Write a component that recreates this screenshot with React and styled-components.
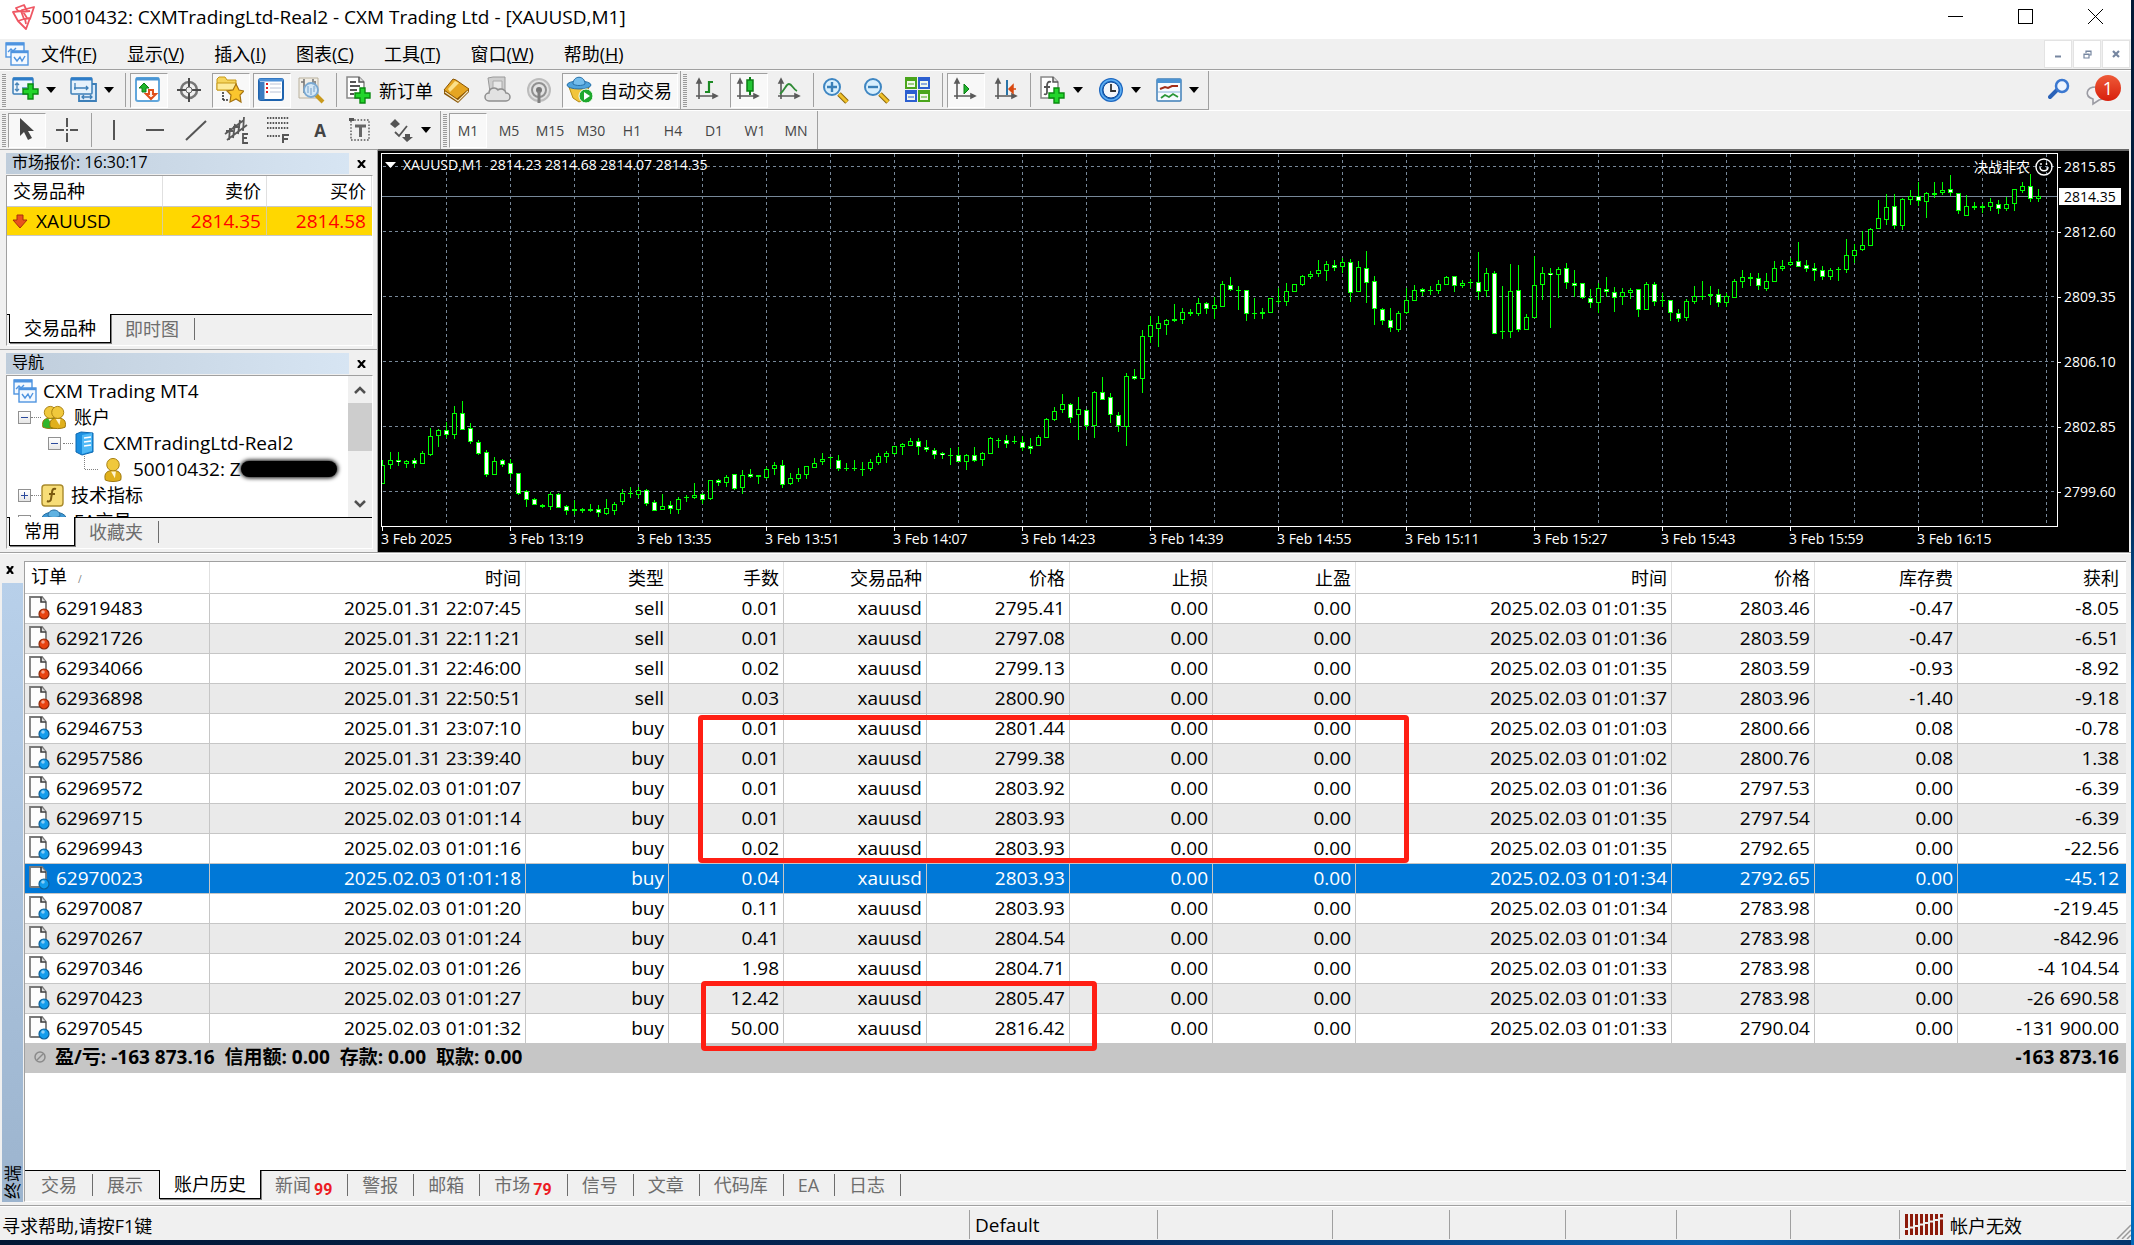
import React from "react";
import styled, { createGlobalStyle } from "styled-components";

const GlobalStyle = createGlobalStyle`
  * {
    box-sizing: border-box;
  }
  body {
    margin: 0;
    font-family: "Open Sans", "Noto Sans CJK SC", sans-serif;
    font-size: 18px;
    color: #000;
  }
  button {
    font-family: inherit;
    color: inherit;
    background: none;
    border: 0;
    padding: 0;
    margin: 0;
  }
  svg {
    flex: none;
  }
`;

const Desktop = styled.div`
  min-height: 100vh;
  padding: 0 3px 5px 0;
  display: flex;
  background:
    linear-gradient(180deg, #021a36 0, #03254b 40%, #0078d7 55%, #00a2f2 75%, #0067b8 100%) right / 3px 100% no-repeat,
    linear-gradient(90deg, #021734 0, #03285a 50%, #0a5fae 80%, #03336b 100%);
`;
const Window = styled.div`
  flex: 1;
  min-width: 0;
  display: flex;
  flex-direction: column;
  background: #f0f0f0;
`;

/* title bar and menu */
const TitleBar = styled.header`
  height: 39px;
  background: #fff;
  display: flex;
  align-items: center;
  padding: 0 0 6px 11px;
`;
const Title = styled.h1`
  flex: 1;
  margin: 0 0 0 5px;
  font-size: 19px;
  font-weight: 400;
  line-height: 32px;
`;
const Caption = styled.button`
  width: 70px;
  height: 32px;
  display: flex;
  align-items: center;
  justify-content: center;
`;
const MenuBar = styled.nav`
  height: 31px;
  display: flex;
  align-items: center;
  padding-left: 5px;
  border-bottom: 1px solid #a0a0a0;
`;
const MenuList = styled.div`
  flex: 1;
  display: flex;
  gap: 30px;
  margin-left: 12px;
`;
const MenuItem = styled.button`
  font-size: 18px;
  line-height: 24px;
`;
const MdiButton = styled.button`
  width: 28px;
  height: 28px;
  margin-right: 1px;
  background: #fff;
  border: 1px solid #e3e3e3;
  display: flex;
  align-items: center;
  justify-content: center;
`;

/* toolbars */
const Toolbar = styled.div`
  height: ${(props) => (props.last ? 39 : 40)}px;
  display: flex;
  border-top: 1px solid #fff;
`;
const Group = styled.div`
  display: flex;
  align-items: center;
  gap: 3px;
  padding: 0 2px 0 8px;
  border-right: 1px solid #a0a0a0;
  border-bottom: ${(props) => (props.last ? "0" : "1px solid #a0a0a0")};
  background: repeating-linear-gradient(180deg, #9a9a9a 0 1px, #f0f0f0 1px 2px) 2px 3px / 4px 34px no-repeat;
`;
const ToolButton = styled.button`
  height: 35px;
  width: ${(props) => props.w || 38}px;
  display: flex;
  align-items: center;
  padding: 0 3px;
  gap: 6px;
  font-size: 18px;
  white-space: nowrap;
  border: 1px solid transparent;
  flex: none;
  ${(props) =>
    props.pressed &&
    `
    border-color: #a0a0a0 #fff #fff #a0a0a0;
    background: #f8f8f8;
  `}
`;
const Period = styled(ToolButton)`
  justify-content: center;
  padding: 0;
  font-size: 14px;
  font-weight: 500;
  color: #444;
`;
const TextTool = styled(Period)`
  font-size: 17px;
  font-weight: 700;
`;
const Separator = styled.span`
  width: 1px;
  height: 34px;
  margin: 0 1px;
  background: #a0a0a0;
`;
const ToolbarEnd = styled.div`
  margin-left: auto;
  display: flex;
  align-items: center;
  gap: 14px;
  padding-right: 10px;
`;
const SearchButton = styled.button`
  width: 24px;
  height: 28px;
`;
const ChatButton = styled.button`
  position: relative;
  width: 36px;
  height: 34px;
`;
const Count = styled.span`
  position: absolute;
  top: 1px;
  right: 0;
  width: 26px;
  height: 26px;
  border-radius: 50%;
  background: linear-gradient(#ee5a38, #d81f0c);
  color: #fff;
  font-size: 18px;
  line-height: 26px;
`;

/* middle area */
const Middle = styled.div`
  display: flex;
  height: 404px;
  border-bottom: 1px solid #a0a0a0;
`;
const Sidebar = styled.aside`
  width: 378px;
  flex: none;
  display: flex;
  flex-direction: column;
  border-top: 1px solid #a0a0a0;
  border-right: 1px solid #a0a0a0;
`;
const Panel = styled.section`
  height: ${(props) => props.h}px;
  display: flex;
  flex-direction: column;
  padding: 3px 4px 3px 6px;
  border-bottom: ${(props) => (props.last ? "0" : "1px solid #a0a0a0")};
`;
const PanelHead = styled.div`
  height: 22px;
  flex: none;
  display: flex;
  align-items: stretch;
`;
const PanelTitle = styled.h2`
  flex: 1;
  margin: 0 0 1px;
  padding-left: 6px;
  font-size: 16px;
  font-weight: 400;
  line-height: 19px;
  background: linear-gradient(90deg, #bfcddb, #d7e5f3);
`;
const CloseButton = styled.button`
  width: 24px;
  height: 22px;
  display: flex;
  align-items: center;
  justify-content: center;
`;
const PanelBody = styled.div`
  flex: 1;
  min-height: 0;
  display: flex;
  flex-direction: column;
  border-top: 1px solid #a0a0a0;
  border-left: 1px solid #a0a0a0;
  border-right: 1px solid #fff;
  border-bottom: 1px solid #fff;
`;
const White = styled.div`
  flex: 1;
  min-height: 0;
  background: #fff;
`;
const Quotes = styled.table`
  width: 100%;
  table-layout: fixed;
  border-spacing: 0;
`;
const QuoteHead = styled.th`
  height: 31px;
  padding: 0 5px 0 6px;
  font-size: 18px;
  font-weight: 400;
  line-height: 28px;
  text-align: ${(props) => (props.left ? "left" : "right")};
  border-right: 1px solid #e0e0e0;
  border-bottom: 1px solid #c8c8c8;
`;
const Quote = styled.td`
  height: 29px;
  padding: 0 5px 0 5px;
  font-size: 19px;
  line-height: 28px;
  background: #ffd700;
  color: ${(props) => (props.left ? "#000" : "#ff0000")};
  text-align: ${(props) => (props.left ? "left" : "right")};
  border-right: 1px solid ${(props) => (props.end ? "#ffd700" : "#d8cf9a")};
  border-bottom: 1px solid #c8c8c8;
`;
const Symbol = styled.span`
  display: flex;
  align-items: center;
  gap: 8px;
`;

const TabBar = styled.div`
  display: flex;
  height: 31px;
  flex: none;
  padding-left: 2px;
  border-top: 1px solid #000;
`;
const Tab = styled.button`
  display: flex;
  align-items: center;
  height: 22px;
  margin-top: 3px;
  padding: 0 15px 0 14px;
  font-size: 18px;
  line-height: 20px;
  color: #6d6d6d;
  border-right: 1px solid ${(props) => (props.beforeActive ? "transparent" : "#6d6d6d")};
  ${(props) =>
    props.active &&
    `
    height: 29px;
    margin-top: -1px;
    padding: 0 14px 0;
    color: #000;
    background: #fff;
    border-left: 1px solid #000;
    border-right: 1px solid #000;
    border-bottom: 1px solid #000;
    box-shadow: 1px 1px 0 #808080;
  `}
`;
const Badge = styled.span`
  align-self: flex-end;
  margin: 0 0 -4px 3px;
  font-family: Roboto, sans-serif;
  font-size: 16px;
  font-weight: 700;
  color: #ed1c24;
`;

/* navigator tree */
const TreeWrap = styled(White)`
  display: flex;
  overflow: hidden;
`;
const Tree = styled.ul`
  flex: 1;
  margin: 0;
  padding: 2px 0 0;
  list-style: none;
  min-width: 0;
`;
const Node = styled.li`
  height: 26px;
  display: flex;
  align-items: center;
  gap: ${(props) => props.gap || 7}px;
  padding-left: ${(props) => props.indent}px;
  font-size: 19px;
  line-height: 26px;
  white-space: nowrap;
`;
const NodeText = styled.span`
  font-size: ${(props) => (props.cjk ? 18 : 19)}px;
`;
const Expander = styled.button`
  width: 13px;
  height: 13px;
  flex: none;
  border: 1px solid #919191;
  background: linear-gradient(#fff, #e6e6e6);
  display: flex;
`;
const Dots = styled.span`
  width: 10px;
  flex: none;
  margin: 0 -7px;
  border-top: 1px dotted #808080;
`;
const Masked = styled.span`
  width: 96px;
  height: 16px;
  margin-left: -10px;
  border-radius: 8px;
  background: #000;
  box-shadow: 0 0 4px 1px #000;
`;
const ScrollBar = styled.div`
  width: 24px;
  background: #f0f0f0;
  display: flex;
  flex-direction: column;
  align-items: center;
`;
const ScrollThumb = styled.div`
  width: 24px;
  height: 48px;
  background: #cdcdcd;
`;
const ScrollArrow = styled.button`
  width: 24px;
  height: 27px;
  margin-top: ${(props) => (props.down ? "auto" : 0)};
  display: flex;
  align-items: center;
  justify-content: center;
`;

/* chart */
const ChartArea = styled.section`
  flex: 1;
  min-width: 0;
  margin-right: 2px;
  padding: 2px 0 0 3px;
  background: #000;
  border-top: 2px solid #696969;
  display: grid;
  grid-template-columns: 1fr 71px;
  grid-template-rows: 374px 1fr;
  color: #fff;
  font-size: 14px;
`;
const Plot = styled.div`
  position: relative;
  border: 1px solid #fff;
  overflow: hidden;
`;
const PlotSvg = styled.svg`
  display: block;
  width: 100%;
  height: 100%;
`;
const PlotLabel = styled.div`
  position: absolute;
  top: 1px;
  left: 3px;
  display: flex;
  align-items: center;
  gap: 7px;
  line-height: 20px;
  white-space: pre;
`;
const ExpertLabel = styled.div`
  position: absolute;
  top: 3px;
  right: 4px;
  display: flex;
  align-items: center;
  gap: 5px;
  line-height: 20px;
`;
const PriceAxis = styled.div`
  position: relative;
  padding-top: 4px;
  display: flex;
  flex-direction: column;
  gap: 45px;
`;
const Price = styled.div`
  height: 20px;
  line-height: 20px;
  display: flex;
  align-items: center;
  &::before {
    content: "";
    width: 3px;
    height: 1px;
    margin-right: 3px;
    background: #fff;
  }
`;
const LastPrice = styled.div`
  position: absolute;
  top: 35px;
  left: 1px;
  padding: 0 5px;
  line-height: 17px;
  background: #fff;
  color: #000;
`;
const TimeAxis = styled.div`
  grid-column: 1 / 3;
  display: flex;
  overflow: hidden;
`;
const Time = styled.div`
  width: 128px;
  flex: none;
  line-height: 16px;
  white-space: nowrap;
  &::before {
    content: "";
    display: block;
    width: 1px;
    height: 4px;
    margin: 0 0 0 1px;
    background: #fff;
  }
`;

/* terminal */
const Terminal = styled.section`
  flex: 1;
  display: flex;
  padding: 7px 5px 3px 2px;
  border-top: 1px solid #fff;
`;
const TerminalRail = styled.div`
  width: 22px;
  display: flex;
  flex-direction: column;
`;
const RailClose = styled(CloseButton)`
  width: 16px;
  height: 18px;
  margin-bottom: 4px;
`;
const Rail = styled.div`
  flex: 1;
  width: 21px;
  padding-top: 3px;
  background: linear-gradient(#9cb4ce, #b8d0ea);
  writing-mode: vertical-rl;
  text-orientation: sideways;
  transform: rotate(180deg);
  font-size: 17px;
  line-height: 21px;
`;
const TerminalBody = styled.div`
  flex: 1;
  min-width: 0;
  display: flex;
  flex-direction: column;
  border-top: 1px solid #a0a0a0;
  border-left: 1px solid #a0a0a0;
  border-bottom: 1px solid #fff;
`;
const Orders = styled.div`
  position: relative;
  flex: 1;
  background: #fff;
  overflow: hidden;
`;
const OrderTable = styled.table`
  width: 100%;
  table-layout: fixed;
  border-spacing: 0;
`;
const Th = styled.th`
  height: 31px;
  padding: 0 4px 0 6px;
  font-size: 18px;
  font-weight: 400;
  line-height: 28px;
  text-align: right;
  border-right: 1px solid #e0e0e0;
  border-bottom: 1px solid #c6c6c6;
  &:first-child {
    text-align: left;
  }
  &:last-child {
    border-right: 0;
    padding-right: 7px;
  }
`;
const SortMark = styled.span`
  margin-left: 11px;
  font-size: 10px;
  color: #808080;
`;
const Td = styled.td`
  height: 30px;
  padding: 0 4px 2px 3px;
  font-size: 19px;
  line-height: 26px;
  text-align: right;
  white-space: nowrap;
  border-right: 1px solid #c6c6c6;
  border-bottom: 1px solid #c6c6c6;
  &:last-child {
    border-right: 0;
    padding-right: 7px;
  }
`;
const Tr = styled.tr`
  &:nth-child(even) {
    background: #eaeaea;
  }
  &:last-child ${Td} {
    height: 29px;
    border-bottom: 0;
  }
  ${(props) =>
    props.selected &&
    `
    && {
      background: #0078d7;
      color: #fff;
    }
  `}
`;
const OrderId = styled.span`
  display: flex;
  align-items: center;
  gap: 6px;
`;
const TotalCell = styled.td`
  height: 30px;
  padding: 0 7px 2px 8px;
  background: #c6c6c6;
  font-size: 19px;
  font-weight: 700;
  line-height: 26px;
  text-align: ${(props) => (props.right ? "right" : "left")};
  white-space: pre;
`;
const TotalText = styled.span`
  display: flex;
  align-items: center;
  gap: 8px;
`;
const Marker = styled.div`
  position: absolute;
  border: 5px solid #ff1f14;
  border-radius: 4px;
  pointer-events: none;
`;
const MarkerHedge = styled(Marker)`
  left: 673px;
  top: 153px;
  width: 711px;
  height: 148px;
`;
const MarkerLots = styled(Marker)`
  left: 676px;
  top: 419px;
  width: 396px;
  height: 70px;
`;

/* status bar */
const StatusBar = styled.footer`
  height: 35px;
  display: flex;
  border-top: 1px solid #a0a0a0;
  box-shadow: inset 0 1px 0 #fff;
  padding: 4px 0 1px;
`;
const StatusCell = styled.div`
  ${(props) => (props.w ? `width: ${props.w}px;` : "flex: 1;")}
  display: flex;
  align-items: center;
  gap: 6px;
  padding-left: ${(props) => (props.first ? 2 : 5)}px;
  font-size: ${(props) => (props.latin ? 19 : 18)}px;
  border-left: ${(props) => (props.first ? "0" : "1px solid #a0a0a0")};
`;
const Resize = styled.span`
  margin-left: auto;
  align-self: flex-end;
  height: 15px;
  line-height: 0;
`;

/* ---------- icons ---------- */
const I = ({ children }) => (
  <svg width="28" height="28" viewBox="0 0 28 28" fill="none">
    {children}
  </svg>
);
const Plus = ({ x = 10, y = 10 }) => (
  <path
    transform={`translate(${x} ${y})`}
    d="M6 1h5v5h5v5h-5v5H6v-5H1V6h5z"
    fill="#23d52b"
    stroke="#0a8a10"
    strokeWidth="1.4"
  />
);
const Axes = () => (
  <path d="M6 5v18M3 20h20M6 3l-2 4h4zM24 20l-4-2v4z" stroke="#5a5a5a" strokeWidth="1.6" fill="#5a5a5a" />
);
const NewChartIcon = () => (
  <I>
    <rect x="1" y="2" width="20" height="16" rx="1" fill="#eef6fd" stroke="#3d7fb8" strokeWidth="1.5" />
    <path d="M1 3h20" stroke="#2d7cc8" strokeWidth="3" />
    <path d="M5 7v8M3 9l2-2 2 2M3 13l2 2 2-2M10 12h5" stroke="#4a86b8" strokeWidth="1.3" />
    <Plus x={10} y={7} />
  </I>
);
const ProfilesIcon = () => (
  <I>
    <path d="M22 8h4v17H9v-6" fill="#dcebf8" stroke="#3d7fb8" strokeWidth="1.8" />
    <path d="M12 21h10M14 19l-2 2 2 2M20 19l2 2-2 2" stroke="#3d7fb8" strokeWidth="1.3" />
    <rect x="1" y="2" width="21" height="16" rx="1" fill="#e6f2fb" stroke="#3d7fb8" strokeWidth="1.5" />
    <path d="M1 3h21" stroke="#2d7cc8" strokeWidth="3" />
    <path d="M5 7v7M4 12h14M16 10l2 2-2 2" stroke="#3d7fb8" strokeWidth="1.3" />
  </I>
);
const WatchIcon = () => (
  <I>
    <rect x="2" y="2" width="23" height="23" rx="2" fill="#fff" stroke="#62a7dc" strokeWidth="2" />
    <path d="M2 3h23" stroke="#4a96d4" strokeWidth="3" />
    <path d="M10 7l5 5h-3v4H8v-4H5z" fill="#20b52a" stroke="#0d7f16" />
    <path d="M17 23l5-5h-3v-4h-4v4h-3z" fill="#fff0e8" stroke="#e0501c" strokeWidth="2" />
  </I>
);
const DataIcon = () => (
  <I>
    <circle cx="14" cy="14" r="8" stroke="#777" strokeWidth="2.5" />
    <path d="M14 2v9M14 17v9M2 14h9M17 14h9" stroke="#4c4c4c" strokeWidth="2" />
    <circle cx="14" cy="14" r="3" fill="#eee" stroke="#666" />
  </I>
);
const NavigatorIcon = () => (
  <I>
    <path d="M1 3l2-2h6l2 3h9v10H1z" fill="#f6d55c" stroke="#c79a1a" />
    <path d="M1 7h19v7H1z" fill="#fdeb9a" stroke="#c79a1a" />
    <path d="M7 16v9M7 24h6" stroke="#333" strokeWidth="1.6" strokeDasharray="2 1" />
    <path d="M20 8l3 6 5 1-4 4 1 7-5-3-6 3 1-7-4-4 6-1z" fill="#fbc52d" stroke="#a67412" strokeWidth="1.2" />
  </I>
);
const TerminalIcon = () => (
  <I>
    <rect x="2" y="3" width="24" height="21" rx="2" fill="#fff" stroke="#1e63ae" strokeWidth="2" />
    <path d="M2 4h24" stroke="#4b8fd6" strokeWidth="3" />
    <path d="M5 6v18" stroke="#3c7cc0" strokeWidth="5" />
    <path d="M9 8h2M9 12h2M9 16h2" stroke="#e02020" strokeWidth="1.8" />
    <path d="M13 8h11M13 12h11M13 16h11" stroke="#bcc4d6" />
  </I>
);
const TesterIcon = () => (
  <I>
    <path d="M1 2h19v20H1z" fill="#f1eee6" stroke="#b9b09c" />
    <path d="M6 3v14M3 6h3M15 3v6M17 5v8" stroke="#777" strokeWidth="1.6" />
    <path d="M18 19l7 7" stroke="#c99a1d" strokeWidth="4" />
    <circle cx="13" cy="14" r="7" fill="#cfe6f8" fillOpacity=".85" stroke="#7aa9d2" strokeWidth="1.8" />
    <path d="M10 10v7M13 12v7M16 10v6" stroke="#8fb4d6" strokeWidth="1.4" />
  </I>
);
const Page = () => (
  <>
    <path d="M2 1h12l5 5v16H2z" fill="#fff" stroke="#888" strokeWidth="1.5" />
    <path d="M14 1v5h5" fill="#ddd" stroke="#555" strokeWidth="1.5" />
  </>
);
const OrderIcon = () => (
  <I>
    <Page />
    <path d="M5 6h6M5 10h10M5 14h7M5 18h4" stroke="#555" strokeWidth="1.8" />
    <Plus x={9} y={11} />
  </I>
);
const BookIcon = () => (
  <I>
    <path d="M1 14v4l14 9 11-11v-3z" fill="#8a5604" />
    <path d="M1 14L10 3l3 1 13 9-12 10z" fill="#e5a521" stroke="#8a5604" />
    <path d="M5 13l7-8 4 2-9 9z" fill="#fbe08a" />
    <path d="M2 16l13 9 10-10" stroke="#f6e6bd" strokeWidth="1.2" />
  </I>
);
const CloudIcon = () => (
  <I>
    <path d="M4 2l5-1h12v15H6z" fill="#cfcfcf" stroke="#999" />
    <path d="M9 5h9v8H9z" fill="#e8e8e8" stroke="#aaa" />
    <path d="M5 25a4 4 0 0 1 0-8 5 5 0 0 1 9-3 5 5 0 0 1 8 3 4 4 0 0 1 0 8z" fill="#e2e2e2" stroke="#8f8f8f" strokeWidth="1.5" />
  </I>
);
const SignalIcon = () => (
  <I>
    <circle cx="14" cy="14" r="11" fill="#e2e2e2" stroke="#bcbcbc" strokeWidth="2" />
    <circle cx="14" cy="14" r="7" stroke="#909090" strokeWidth="2" />
    <circle cx="14" cy="14" r="3" fill="#777" />
    <path d="M14 15v12" stroke="#808080" strokeWidth="3" />
  </I>
);
const AutoIcon = () => (
  <I>
    <path d="M3 11h20l-4 12-6 3-6-4z" fill="#f2c53c" stroke="#b58a14" />
    <ellipse cx="13" cy="9" rx="12" ry="4" fill="#4fa3dc" stroke="#2670a8" />
    <path d="M7 8c0-9 12-9 12 0-3 2-9 2-12 0z" fill="#74bdec" stroke="#2670a8" />
    <circle cx="20" cy="20" r="7" fill="#1fa82d" stroke="#fff" />
    <path d="M18 16l6 4-6 4z" fill="#fff" />
  </I>
);
const BarsIcon = () => (
  <I>
    <Axes />
    <path d="M16 5v12M16 6h4M12 16h4" stroke="#1c8a24" strokeWidth="2.2" />
  </I>
);
const CandlesIcon = () => (
  <I>
    <Axes />
    <path d="M16 1v18" stroke="#0b7d15" strokeWidth="2" />
    <rect x="13" y="4" width="6" height="11" fill="#23c534" stroke="#0b7d15" strokeWidth="1.5" />
  </I>
);
const LineIcon = () => (
  <I>
    <Axes />
    <path d="M5 18c5-4 6-10 9-10s4 5 8 7" stroke="#2f8a36" strokeWidth="1.8" />
  </I>
);
const ZoomIcon = ({ plus }) => (
  <I>
    <path d="M17 18l8 8" stroke="#8b6508" strokeWidth="5" />
    <path d="M17 18l8 8" stroke="#f0c22c" strokeWidth="3" />
    <circle cx="10" cy="11" r="8" fill="#d8effd" stroke="#3e86c2" strokeWidth="2" />
    <path d={plus ? "M5 11h10M10 6v10" : "M5 11h10"} stroke="#3a80b8" strokeWidth="2.4" />
  </I>
);
const TilesIcon = () => (
  <I>
    {[
      [1, 1, "#4aa51c"],
      [14, 1, "#2c5fd0"],
      [1, 14, "#2c5fd0"],
      [14, 14, "#4aa51c"],
    ].map(([x, y, c]) => (
      <g key={`${x}-${y}`}>
        <rect x={x} y={y} width="12" height="12" fill={c} />
        <rect x={x + 2} y={y + 4} width="8" height="6" fill="#f2f8ec" />
        <path d={`M${x + 3} ${y + 7}h6`} stroke={c} />
      </g>
    ))}
  </I>
);
const ScrollIcon = () => (
  <I>
    <Axes />
    <path d="M13 8l5 5-5 5z" fill="#1fb52c" stroke="#0b7d15" />
  </I>
);
const ShiftIcon = () => (
  <I>
    <Axes />
    <path d="M15 4v15" stroke="#2874a8" strokeWidth="2" />
    <path d="M24 13h-5M17 13l4-4v8z" fill="#d9480f" stroke="#d9480f" strokeWidth="1.5" />
  </I>
);
const IndicatorIcon = () => (
  <I>
    <Page />
    <path d="M12 6c-3-1-4 1-4 4v6c0 2-1 3-3 2M5 11h6" stroke="#555" strokeWidth="1.8" />
    <Plus x={9} y={11} />
  </I>
);
const ClockIcon = () => (
  <I>
    <circle cx="14" cy="14" r="12" fill="#1b66c0" />
    <circle cx="14" cy="14" r="10" stroke="#5fb0f2" strokeWidth="1.5" />
    <circle cx="14" cy="14" r="8" fill="#f3f6fa" stroke="#0b4a98" />
    <path d="M14 8v7h5" stroke="#333" strokeWidth="1.8" />
  </I>
);
const TemplateIcon = () => (
  <I>
    <rect x="2" y="3" width="24" height="22" rx="1" fill="#f7fbff" stroke="#3f7fb8" strokeWidth="1.5" />
    <path d="M2 5h24" stroke="#4c93d2" strokeWidth="4" />
    <path d="M5 13l5-2 3 1 4-2h6" stroke="#a12d18" strokeWidth="2" />
    <path d="M3 16h22" stroke="#8ab3d8" />
    <path d="M6 22l4-3 4 2 4-3 5 3" stroke="#2a9636" strokeWidth="1.8" />
  </I>
);
const CursorIcon = () => (
  <I>
    <path d="M8 2v18l4-4 4 8 4-2-4-7h6z" fill="#444" />
  </I>
);
const CrossIcon = () => (
  <I>
    <path d="M14 2v9M14 17v9M3 14h8M17 14h8M13 14h2" stroke="#555" strokeWidth="2" />
  </I>
);
const VLineIcon = () => (
  <I>
    <path d="M14 4v20" stroke="#555" strokeWidth="2" />
  </I>
);
const HLineIcon = () => (
  <I>
    <path d="M5 14h18" stroke="#555" strokeWidth="2" />
  </I>
);
const TrendIcon = () => (
  <I>
    <path d="M4 24L24 5" stroke="#555" strokeWidth="2" />
  </I>
);
const ChannelIcon = () => (
  <I>
    <path d="M2 18L21 4M4 24L24 9M7 12L6 24M12 8l-2 14M17 4l-2 14M21 1l-1 14M3 15h7M10 11h7" stroke="#5a5a5a" strokeWidth="1.8" />
    <path d="M25 18h-5v9h5M20 22h4" stroke="#555" strokeWidth="1.8" />
  </I>
);
const FiboIcon = () => (
  <I>
    <path d="M3 2h22M3 7h22M3 12h22M3 20h13" stroke="#555" strokeWidth="1.8" strokeDasharray="1.6 1.2" />
    <path d="M19 27v-8h6M19 23h5" stroke="#555" strokeWidth="2" />
  </I>
);
const LabelIcon = () => (
  <I>
    <rect x="5" y="4" width="18" height="20" stroke="#555" strokeWidth="1.4" strokeDasharray="1.6 1.6" />
    <path d="M9 10h11M14.5 10v11" stroke="#666" strokeWidth="3" />
    <path d="M3 2h5v3H3z" fill="#555" />
  </I>
);
const ShapesIcon = () => (
  <I>
    <path d="M8 3l5 5-5 4-5-4zM20 26l-5-5h3v-3h5v3h3z" fill="#555" />
    <path d="M8 16l4 4 8-10" stroke="#555" strokeWidth="1.8" />
  </I>
);
const Caret = () => (
  <svg width="10" height="6" viewBox="0 0 10 6">
    <path d="M0 0h10L5 6z" fill="#000" />
  </svg>
);
const Logo = () => (
  <svg width="25" height="26" viewBox="0 0 25 26" fill="none" stroke="#ef5763" strokeWidth="1.8" strokeLinejoin="round">
    <path d="M2 8l8-1 3 8-6 2zM7 7L5 4l8-3 3 6M11 6l12-3-4 12-3-1zM10 8l9-1M7 17l8 8 4-11-5 1 1 5" />
  </svg>
);
const ChartsIcon = () => (
  <svg width="24" height="24" viewBox="0 0 24 24" fill="#f4f9ff" stroke="#4f94e0" strokeWidth="1.4">
    <rect x="1" y="1" width="18" height="14" />
    <path d="M1 2h18" strokeWidth="3" />
    <path d="M3 10l3-3 2 2 3-3" />
    <rect x="6" y="9" width="17" height="14" />
    <path d="M6 10h17" strokeWidth="2.4" />
    <path d="M9 15l3 4 3-4 2 4 3-5" fill="none" />
  </svg>
);
const CloseMark = () => (
  <svg width="9" height="8" viewBox="0 0 9 8">
    <path d="M1 0l7 8M8 0L1 8" stroke="#000" strokeWidth="2.2" />
  </svg>
);
const DownArrow = () => (
  <svg width="16" height="16" viewBox="0 0 16 16">
    <path d="M5 2h6v5h4l-7 8-7-8h4z" fill="#e8541e" stroke="#a8300a" />
  </svg>
);
const User = ({ x = 0, body = "#e0b01c" }) => (
  <g transform={`translate(${x} 0)`}>
    <path d="M2 24c-2-8 3-10 8-10s10 2 8 10c-4 2-12 2-16 0z" fill={body} stroke="#9a7408" />
    <circle cx="10" cy="8" r="6.5" fill="#f0c83c" stroke="#a67d0c" />
    <path d="M8 15l4 7 1-7z" fill="#fff5cf" />
  </g>
);
const UsersIcon = () => (
  <svg width="26" height="25" viewBox="0 0 28 27">
    <User x={0} body="#2fb52a" />
    <User x={8} />
  </svg>
);
const UserIcon = () => (
  <svg width="20" height="25" viewBox="0 0 20 26">
    <User />
  </svg>
);
const ServerIcon = () => (
  <svg width="19" height="25" viewBox="0 0 19 25">
    <path d="M1 3l5-2 12 1v19l-11 3-6-3z" fill="#1b8fe0" stroke="#0d68b0" />
    <path d="M7 4l10-2v18L7 23z" fill="#4fb9f7" />
    <path d="M9 7l7-1M9 11l7-1M9 15l7-1" stroke="#fff" strokeWidth="1.5" />
  </svg>
);
const FxIcon = () => (
  <svg width="23" height="23" viewBox="0 0 23 23" fill="none">
    <rect x="1" y="1" width="21" height="21" rx="3" fill="#f7dd78" stroke="#a98a2c" strokeWidth="1.4" />
    <path d="M15 5c-3-1-4 1-4 4l-1 6c0 2-2 3-4 2M8 10h6" stroke="#7a5a10" strokeWidth="2" />
  </svg>
);
const HatIcon = () => (
  <svg width="26" height="24" viewBox="0 0 26 24">
    <ellipse cx="13" cy="9" rx="12" ry="6" fill="#3e98d4" stroke="#2a6f9f" />
    <path d="M7 7c0-8 12-8 12 0-3 2-9 2-12 0z" fill="#5fb2e2" stroke="#2a6f9f" />
  </svg>
);
const OrderDoc = ({ sell }) => (
  <svg width="22" height="26" viewBox="0 0 22 26" fill="none">
    <path d="M2 2h12l4 5v15H3a1 1 0 0 1-1-1z" fill="#fdfdfd" stroke="#7a7a7a" strokeWidth="1.8" />
    <path d="M13 2v5h5" fill="#ddd" stroke="#3c3c3c" strokeWidth="1.6" />
    <circle cx="16" cy="19" r="5" fill={sell ? "#e8430f" : "#129cec"} stroke={sell ? "#8c2808" : "#0b5f98"} strokeWidth="1.2" />
    <circle cx="15" cy="17" r="1.8" fill="#fff" fillOpacity=".5" />
  </svg>
);

/* ---------- data ---------- */
// high, body top, body bottom, low, kind: u hollow, d filled, x flat; three units to a chart pixel
const CANDLES = `945 960 1019 1019 u|921 945 962 974 u|921 945 953 965 d|945 950 959 971 u|939 947 957 969 d|918 926 957 959 u
849 873 930 933 u|852 855 873 906 u|831 855 870 881 d|783 804 870 884 u|768 804 857 857 d|834 849 891 899 d
885 891 927 930 d|915 923 990 998 d|936 948 990 990 u|942 945 960 968 d|942 954 987 999 d|984 984 1047 1050 d
1036 1038 1065 1088 d|1059 1062 1080 1080 d|1077 1080 1086 1089 x|1041 1047 1086 1095 u|1044 1047 1089 1089 d
1080 1083 1098 1110 d|1065 1092 1098 1110 x|1089 1094 1098 1104 x|1077 1092 1098 1101 x|1080 1092 1104 1116 d
1062 1089 1107 1110 u|1071 1077 1098 1110 u|1032 1044 1071 1080 u|1026 1044 1047 1059 x|1026 1035 1050 1059 u
1032 1035 1077 1083 d|1065 1071 1098 1098 d|1047 1083 1095 1095 u|1068 1080 1092 1107 d|1056 1062 1095 1107 u
1052 1056 1061 1071 x|1014 1050 1060 1062 u|1044 1047 1065 1077 d|1005 1005 1062 1065 u|1002 1005 1014 1023 d
990 996 1014 1026 u|987 987 1032 1035 d|975 990 1029 1047 u|972 987 996 999 d|990 990 996 1017 x|966 972 999 1002 u
951 960 972 990 u|945 960 1020 1029 d|984 999 1017 1020 u|969 987 1002 1011 u|963 963 990 1002 u|939 954 969 969 u
924 942 951 960 u|936 936 941 969 x|930 945 972 980 d|954 969 974 980 x|945 969 974 980 x|951 972 977 993 x
942 951 972 980 u|924 933 954 960 u|918 924 936 954 u|903 903 927 930 u|894 897 906 930 u|879 888 903 903 u
879 888 906 930 d|885 906 917 923 d|909 915 930 942 d|921 924 932 944 d|909 930 933 960 x|906 930 951 953 d
927 930 951 975 u|906 930 948 951 d|921 926 945 963 u|876 879 927 927 u|881 885 890 909 x|870 885 897 909 d
873 890 893 897 x|873 891 909 918 d|879 903 912 927 d|870 876 903 903 u|819 822 879 879 u|786 798 825 828 u
747 777 795 804 u|774 777 819 834 d|756 792 810 885 u|792 795 843 855 d|738 741 843 879 u|696 741 765 765 d
744 756 810 834 d|801 810 843 861 d|684 693 846 903 u|672 693 702 705 d|555 573 702 744 u|513 540 576 594 u
513 534 552 606 u|522 525 540 570 u|477 522 528 531 x|489 501 525 537 u|492 501 507 513 x|459 474 507 513 u
471 474 492 507 d|456 480 492 522 u|408 417 486 486 u|396 420 435 438 d|423 435 440 495 x|435 435 507 528 d
459 504 507 522 x|489 501 507 522 x|459 459 504 504 u|429 468 471 477 x|414 438 471 483 u|417 417 441 441 u
390 393 420 423 u|378 387 396 402 u|345 375 387 396 u|348 357 378 408 u|345 360 369 378 d|339 351 366 384 u
342 351 444 471 d|348 366 441 441 u|318 369 414 474 d|393 408 492 540 d|489 492 528 540 d|489 525 549 561 d
498 504 555 561 u|429 465 504 507 u|420 435 468 468 u|429 432 441 453 d|423 435 438 450 x|405 417 438 447 u
393 396 420 420 u|393 393 423 441 d|405 414 423 429 u|402 411 416 429 x|321 411 441 465 d|369 384 438 456 u
378 384 567 567 d|423 558 563 582 x|357 438 561 579 u|360 435 555 561 d|507 516 555 555 u|333 420 519 519 u
366 384 420 465 u|369 384 392 549 d|366 372 392 459 u|354 369 416 432 d|375 414 423 456 d|414 414 459 462 d
432 459 474 489 d|414 429 474 504 u|396 432 443 456 d|426 441 459 501 d|429 441 456 480 u|429 435 444 462 u
432 432 495 516 d|411 417 495 495 u|411 417 471 483 d|444 465 468 486 x|465 465 504 528 d|492 504 522 531 d
462 468 519 528 u|423 453 471 477 u|408 453 456 465 x|423 447 453 480 x|432 447 474 486 d|444 453 474 486 u
402 408 459 459 u|375 396 411 429 u|384 396 402 423 x|384 399 423 435 d|384 408 432 438 u|348 369 411 411 u
345 363 372 378 u|339 351 360 363 u|291 348 366 366 d|345 360 372 381 d|354 369 378 408 d|363 375 396 405 d
369 375 396 405 u|366 372 375 408 x|282 330 375 384 u|297 315 333 354 u|258 300 315 318 u|249 252 303 303 u
165 219 252 252 u|147 186 225 240 u|147 183 243 252 d|159 162 243 255 u|135 153 165 180 u|111 153 168 183 d
141 144 171 219 u|111 144 150 159 x|111 135 144 150 u|90 132 144 153 d|144 144 198 207 d|150 183 213 213 u
171 183 189 195 x|177 183 189 204 x|159 171 186 198 u|165 177 192 207 d|156 177 192 198 u|132 132 177 198 u
111 123 138 144 u|87 123 162 171 d|132 153 162 171 u`
  .split(/[|\n]/)
  .map((row) => {
    const parts = row.split(" ");
    return { y: parts.slice(0, 4).map((v) => Math.floor(v / 3) - 9), kind: parts[4] };
  });

const PRICES = ["2815.85", "2812.60", "2809.35", "2806.10", "2802.85", "2799.60"];
const TIMES = [
  "3 Feb 2025",
  "3 Feb 13:19",
  "3 Feb 13:35",
  "3 Feb 13:51",
  "3 Feb 14:07",
  "3 Feb 14:23",
  "3 Feb 14:39",
  "3 Feb 14:55",
  "3 Feb 15:11",
  "3 Feb 15:27",
  "3 Feb 15:43",
  "3 Feb 15:59",
  "3 Feb 16:15",
];
const MENU = [
  ["文件", "F"],
  ["显示", "V"],
  ["插入", "I"],
  ["图表", "C"],
  ["工具", "T"],
  ["窗口", "W"],
  ["帮助", "H"],
];
const PERIODS = ["M1", "M5", "M15", "M30", "H1", "H4", "D1", "W1", "MN"];
const COLUMNS = [
  ["订单", 185],
  ["时间", 316],
  ["类型", 143],
  ["手数", 115],
  ["交易品种", 143],
  ["价格", 143],
  ["止损", 143],
  ["止盈", 143],
  ["时间", 316],
  ["价格", 143],
  ["库存费", 143],
  ["获利"],
];
const ORDERS = [
  ["62919483", "2025.01.31 22:07:45", "sell", "0.01", "2795.41", "01:01:35", "2803.46", "-0.47", "-8.05"],
  ["62921726", "2025.01.31 22:11:21", "sell", "0.01", "2797.08", "01:01:36", "2803.59", "-0.47", "-6.51"],
  ["62934066", "2025.01.31 22:46:00", "sell", "0.02", "2799.13", "01:01:35", "2803.59", "-0.93", "-8.92"],
  ["62936898", "2025.01.31 22:50:51", "sell", "0.03", "2800.90", "01:01:37", "2803.96", "-1.40", "-9.18"],
  ["62946753", "2025.01.31 23:07:10", "buy", "0.01", "2801.44", "01:01:03", "2800.66", "0.08", "-0.78"],
  ["62957586", "2025.01.31 23:39:40", "buy", "0.01", "2799.38", "01:01:02", "2800.76", "0.08", "1.38"],
  ["62969572", "2025.02.03 01:01:07", "buy", "0.01", "2803.92", "01:01:36", "2797.53", "0.00", "-6.39"],
  ["62969715", "2025.02.03 01:01:14", "buy", "0.01", "2803.93", "01:01:35", "2797.54", "0.00", "-6.39"],
  ["62969943", "2025.02.03 01:01:16", "buy", "0.02", "2803.93", "01:01:35", "2792.65", "0.00", "-22.56"],
  ["62970023", "2025.02.03 01:01:18", "buy", "0.04", "2803.93", "01:01:34", "2792.65", "0.00", "-45.12"],
  ["62970087", "2025.02.03 01:01:20", "buy", "0.11", "2803.93", "01:01:34", "2783.98", "0.00", "-219.45"],
  ["62970267", "2025.02.03 01:01:24", "buy", "0.41", "2804.54", "01:01:34", "2783.98", "0.00", "-842.96"],
  ["62970346", "2025.02.03 01:01:26", "buy", "1.98", "2804.71", "01:01:33", "2783.98", "0.00", "-4 104.54"],
  ["62970423", "2025.02.03 01:01:27", "buy", "12.42", "2805.47", "01:01:33", "2783.98", "0.00", "-26 690.58"],
  ["62970545", "2025.02.03 01:01:32", "buy", "50.00", "2816.42", "01:01:33", "2790.04", "0.00", "-131 900.00"],
];
const TABS = [
  { name: "交易" },
  { name: "展示", beforeActive: true },
  { name: "账户历史", active: true },
  { name: "新闻", count: 99 },
  { name: "警报" },
  { name: "邮箱" },
  { name: "市场", count: 79 },
  { name: "信号" },
  { name: "文章" },
  { name: "代码库" },
  { name: "EA" },
  { name: "日志" },
];

const Tool = ({ icon, label, drop, ...rest }) => (
  <ToolButton aria-label={label} w={drop ? 55 : undefined} {...rest}>
    {icon}
    {drop && <Caret />}
  </ToolButton>
);

function Toolbars() {
  return (
    <>
      <Toolbar>
        <Group>
          <Tool icon={<NewChartIcon />} label="新图表" drop />
          <Tool icon={<ProfilesIcon />} label="配置文件" drop />
          <Separator />
          <Tool icon={<WatchIcon />} label="市场报价" pressed />
          <Tool icon={<DataIcon />} label="数据窗口" />
          <Tool icon={<NavigatorIcon />} label="导航" pressed />
          <Tool icon={<TerminalIcon />} label="终端" pressed />
          <Tool icon={<TesterIcon />} label="策略测试" />
          <Separator />
          <ToolButton w={95}>
            <OrderIcon />
            新订单
          </ToolButton>
          <Tool icon={<BookIcon />} label="MetaEditor" />
          <Tool icon={<CloudIcon />} label="云" />
          <Tool icon={<SignalIcon />} label="信号" />
          <ToolButton w={116} pressed>
            <AutoIcon />
            自动交易
          </ToolButton>
        </Group>
        <Group>
          <Tool icon={<BarsIcon />} label="柱状图" />
          <Tool icon={<CandlesIcon />} label="蜡烛图" pressed />
          <Tool icon={<LineIcon />} label="折线图" />
          <Separator />
          <Tool icon={<ZoomIcon plus />} label="放大" />
          <Tool icon={<ZoomIcon />} label="缩小" />
          <Tool icon={<TilesIcon />} label="平铺" />
          <Separator />
          <Tool icon={<ScrollIcon />} label="自动滚动" pressed />
          <Tool icon={<ShiftIcon />} label="图表平移" />
          <Separator />
          <Tool icon={<IndicatorIcon />} label="指标" drop />
          <Tool icon={<ClockIcon />} label="时间周期" drop />
          <Tool icon={<TemplateIcon />} label="模板" drop />
        </Group>
        <ToolbarEnd>
          <SearchButton aria-label="搜索">
            <svg width="22" height="22" viewBox="0 0 22 22" fill="none">
              <path d="M9 12l-7 7" stroke="#2b62b8" strokeWidth="4" strokeLinecap="round" />
              <circle cx="14" cy="8" r="6" fill="#eef5ff" stroke="#3b78d0" strokeWidth="2.5" />
            </svg>
          </SearchButton>
          <ChatButton aria-label="消息 1">
            <svg width="36" height="34" viewBox="0 0 36 34" fill="none">
              <path d="M8 30v-5C-1 22 1 13 11 13c12 0 13 12 3 13z" fill="#f2f2f4" stroke="#9a9aa2" strokeWidth="1.6" />
            </svg>
            <Count>1</Count>
          </ChatButton>
        </ToolbarEnd>
      </Toolbar>
      <Toolbar last>
        <Group last>
          <Tool icon={<CursorIcon />} label="光标" pressed />
          <Tool icon={<CrossIcon />} label="十字线" />
          <Separator />
          <Tool icon={<VLineIcon />} label="垂直线" />
          <Tool icon={<HLineIcon />} label="水平线" />
          <Tool icon={<TrendIcon />} label="趋势线" />
          <Tool icon={<ChannelIcon />} label="等距通道" />
          <Tool icon={<FiboIcon />} label="斐波那契" />
          <TextTool>A</TextTool>
          <Tool icon={<LabelIcon />} label="文字标签" />
          <Tool icon={<ShapesIcon />} label="箭头" drop />
        </Group>
        <Group last>
          {PERIODS.map((p) => (
            <Period key={p} pressed={p === "M1"}>
              {p}
            </Period>
          ))}
        </Group>
      </Toolbar>
    </>
  );
}

function MarketWatch() {
  return (
    <Panel h={201}>
      <PanelHead>
        <PanelTitle>市场报价: 16:30:17</PanelTitle>
        <CloseButton aria-label="关闭">
          <CloseMark />
        </CloseButton>
      </PanelHead>
      <PanelBody>
        <White>
          <Quotes>
            <colgroup>
              <col />
              <col width="104" />
              <col width="105" />
            </colgroup>
            <thead>
              <tr>
                <QuoteHead left>交易品种</QuoteHead>
                <QuoteHead>卖价</QuoteHead>
                <QuoteHead>买价</QuoteHead>
              </tr>
            </thead>
            <tbody>
              <tr>
                <Quote left>
                  <Symbol>
                    <DownArrow />
                    XAUUSD
                  </Symbol>
                </Quote>
                <Quote>2814.35</Quote>
                <Quote end>2814.58</Quote>
              </tr>
            </tbody>
          </Quotes>
        </White>
        <TabBar>
          <Tab active>交易品种</Tab>
          <Tab>即时图</Tab>
        </TabBar>
      </PanelBody>
    </Panel>
  );
}

const Toggle = ({ open }) => (
  <Expander aria-label={open ? "折叠" : "展开"}>
    <svg width="11" height="11" viewBox="0 0 11 11">
      <path d={open ? "M2 5.5h7" : "M2 5.5h7M5.5 2v7"} stroke="#2b4a9c" />
    </svg>
  </Expander>
);

function Navigator() {
  return (
    <Panel h={202} last>
      <PanelHead>
        <PanelTitle>导航</PanelTitle>
        <CloseButton aria-label="关闭">
          <CloseMark />
        </CloseButton>
      </PanelHead>
      <PanelBody>
        <TreeWrap>
          <Tree>
            <Node indent={6} gap={6}>
              <ChartsIcon />
              <NodeText>CXM Trading MT4</NodeText>
            </Node>
            <Node indent={11}>
              <Toggle open />
              <Dots />
              <UsersIcon />
              <NodeText cjk>账户</NodeText>
            </Node>
            <Node indent={41} gap={9}>
              <Toggle open />
              <Dots />
              <ServerIcon />
              <NodeText>CXMTradingLtd-Real2</NodeText>
            </Node>
            <Node indent={76} gap={10}>
              <BranchLine />
              <UserIcon />
              <NodeText>50010432: Z</NodeText>
              <Masked />
            </Node>
            <Node indent={11}>
              <Toggle />
              <Dots />
              <FxIcon />
              <NodeText cjk>技术指标</NodeText>
            </Node>
            <Node indent={11}>
              <Toggle />
              <Dots />
              <HatIcon />
              <NodeText cjk>EA交易</NodeText>
            </Node>
          </Tree>
          <ScrollBar>
            <ScrollArrow aria-label="向上">
              <svg width="12" height="8" viewBox="0 0 12 8" fill="none">
                <path d="M1 7l5-5 5 5" stroke="#505050" strokeWidth="2.5" />
              </svg>
            </ScrollArrow>
            <ScrollThumb />
            <ScrollArrow aria-label="向下" down>
              <svg width="12" height="8" viewBox="0 0 12 8" fill="none">
                <path d="M1 1l5 5 5-5" stroke="#505050" strokeWidth="2.5" />
              </svg>
            </ScrollArrow>
          </ScrollBar>
        </TreeWrap>
        <TabBar>
          <Tab active>常用</Tab>
          <Tab>收藏夹</Tab>
        </TabBar>
      </PanelBody>
    </Panel>
  );
}

const BranchLine = () => (
  <svg width="10" height="26" viewBox="0 0 10 26" overflow="visible">
    <path d="M1.5 0v14M2 13.5h14" stroke="#808080" strokeDasharray="1 1" fill="none" />
  </svg>
);

function Candle({ index, y, kind }) {
  const [high, top, bottom, low] = y;
  const x = index * 8;
  const h = Math.max(1, bottom - top);
  return (
    <g>
      <rect x={x} y={high} width="1" height={Math.max(1, low - high)} fill="#0f0" />
      <rect x={x - 2} y={top} width="5" height={h} fill="#0f0" />
      {kind !== "x" && (
        <rect x={x - 1} y={top + 1} width="3" height={Math.max(1, h - 2)} fill={kind === "u" ? "#000" : "#fff"} />
      )}
    </g>
  );
}

function Chart() {
  const columns = Array.from({ length: 26 }, (_, i) => (i + 1) * 64);
  return (
    <ChartArea>
      <Plot>
        <PlotSvg shapeRendering="crispEdges">
          <g stroke="#778899" strokeDasharray="3 3">
            {columns.map((x) => (
              <line key={x} x1={x + 0.5} x2={x + 0.5} y1="0" y2="100%" />
            ))}
            {PRICES.map((p, i) => (
              <line key={p} x1="1" x2="100%" y1={12.5 + i * 65} y2={12.5 + i * 65} />
            ))}
          </g>
          <line x1="0" x2="100%" y1="42.5" y2="42.5" stroke="#778899" />
          {CANDLES.map((c, i) => (
            <Candle key={i} index={i} {...c} />
          ))}
        </PlotSvg>
        <PlotLabel>
          <svg width="11" height="6" viewBox="0 0 11 6">
            <path d="M0 0h11L5.5 6z" fill="#fff" />
          </svg>
          {"XAUUSD,M1  2814.23 2814.68 2814.07 2814.35"}
        </PlotLabel>
        <ExpertLabel>
          决战非农
          <svg width="18" height="18" viewBox="0 0 18 18" fill="none" stroke="#fff" strokeWidth="1.4">
            <circle cx="9" cy="9" r="8" />
            <path d="M5 9c0 5 8 5 8 0M6 5v2M11.5 5v2" />
          </svg>
        </ExpertLabel>
      </Plot>
      <PriceAxis>
        {PRICES.map((p) => (
          <Price key={p}>{p}</Price>
        ))}
        <LastPrice>2814.35</LastPrice>
      </PriceAxis>
      <TimeAxis>
        {TIMES.map((t) => (
          <Time key={t}>{t}</Time>
        ))}
      </TimeAxis>
    </ChartArea>
  );
}

function History() {
  return (
    <Orders>
      <OrderTable>
        <colgroup>
          {COLUMNS.map(([, width], i) => (
            <col key={i} width={width} />
          ))}
        </colgroup>
        <thead>
          <tr>
            {COLUMNS.map(([name], i) => (
              <Th key={i}>
                {name}
                {i === 0 && <SortMark>/</SortMark>}
              </Th>
            ))}
          </tr>
        </thead>
        <tbody>
          {ORDERS.map(([id, opened, type, lots, price, closed, closePrice, swap, profit]) => (
            <Tr key={id} selected={id === "62970023"}>
              <Td>
                <OrderId>
                  <OrderDoc sell={type === "sell"} />
                  {id}
                </OrderId>
              </Td>
              <Td>{opened}</Td>
              <Td>{type}</Td>
              <Td>{lots}</Td>
              <Td>xauusd</Td>
              <Td>{price}</Td>
              <Td>0.00</Td>
              <Td>0.00</Td>
              <Td>2025.02.03 {closed}</Td>
              <Td>{closePrice}</Td>
              <Td>{swap}</Td>
              <Td>{profit}</Td>
            </Tr>
          ))}
        </tbody>
        <tfoot>
          <tr>
            <TotalCell colSpan={9}>
              <TotalText>
                <svg width="14" height="14" viewBox="0 0 14 14" fill="none" stroke="#8a8a8a" strokeWidth="1.5">
                  <circle cx="7" cy="7" r="5" />
                  <path d="M4 10l6-6" />
                </svg>
                {"盈/亏: -163 873.16  信用额: 0.00  存款: 0.00  取款: 0.00"}
              </TotalText>
            </TotalCell>
            <TotalCell colSpan={3} right>
              -163 873.16
            </TotalCell>
          </tr>
        </tfoot>
      </OrderTable>
      <MarkerHedge />
      <MarkerLots />
    </Orders>
  );
}

function App() {
  return (
    <Desktop>
      <GlobalStyle />
      <Window>
        <TitleBar>
          <Logo />
          <Title>50010432: CXMTradingLtd-Real2 - CXM Trading Ltd - [XAUUSD,M1]</Title>
          <Caption aria-label="最小化">
            <svg width="16" height="16" viewBox="0 0 16 16">
              <path d="M0 7.5h15" stroke="#000" />
            </svg>
          </Caption>
          <Caption aria-label="最大化">
            <svg width="16" height="16" viewBox="0 0 16 16">
              <rect x=".5" y=".5" width="14" height="14" fill="none" stroke="#000" />
            </svg>
          </Caption>
          <Caption aria-label="关闭">
            <svg width="16" height="16" viewBox="0 0 16 16">
              <path d="M0 0l15 15M15 0L0 15" stroke="#000" />
            </svg>
          </Caption>
        </TitleBar>
        <MenuBar>
          <ChartsIcon />
          <MenuList>
            {MENU.map(([name, key]) => (
              <MenuItem key={key}>
                {name}(<u>{key}</u>)
              </MenuItem>
            ))}
          </MenuList>
          <MdiButton aria-label="最小化">
            <svg width="6" height="8" viewBox="0 0 6 8">
              <path d="M0 6.500h6" stroke="#7686a0" strokeWidth="2" />
            </svg>
          </MdiButton>
          <MdiButton aria-label="还原">
            <svg width="9" height="9" viewBox="0 0 9 9" fill="none" stroke="#7686a0" strokeWidth="1.2">
              <path d="M3 3V1h5v4H6M1 4h5v4H1zM1 4.500h5M3 1.500h5" />
            </svg>
          </MdiButton>
          <MdiButton aria-label="关闭">
            <svg width="8" height="8" viewBox="0 0 8 8">
              <path d="M1 1l6 6M7 1L1 7" stroke="#7686a0" strokeWidth="2.2" />
            </svg>
          </MdiButton>
        </MenuBar>
        <Toolbars />
        <Middle>
          <Sidebar>
            <MarketWatch />
            <Navigator />
          </Sidebar>
          <Chart />
        </Middle>
        <Terminal>
          <TerminalRail>
            <RailClose aria-label="关闭">
              <svg width="8" height="8" viewBox="0 0 8 8">
                <path d="M1 0l6 8M7 0L1 8" stroke="#000" strokeWidth="2.2" />
              </svg>
            </RailClose>
            <Rail>终端</Rail>
          </TerminalRail>
          <TerminalBody>
            <History />
            <TabBar>
              {TABS.map((t) => (
                <Tab key={t.name} active={t.active} beforeActive={t.beforeActive}>
                  {t.name}
                  {t.count && <Badge>{t.count}</Badge>}
                </Tab>
              ))}
            </TabBar>
          </TerminalBody>
        </Terminal>
        <StatusBar>
          <StatusCell first>寻求帮助,请按F1键</StatusCell>
          <StatusCell w={188} latin>
            Default
          </StatusCell>
          <StatusCell w={175} />
          <StatusCell w={117} />
          <StatusCell w={116} />
          <StatusCell w={111} />
          <StatusCell w={114} />
          <StatusCell w={109} />
          <StatusCell w={232}>
            <svg width="39" height="21" viewBox="0 0 39 21">
              {[0, 1, 2, 3, 4, 5, 6, 7].map((i) => (
                <g key={i} fill="#8c1a0a">
                  <rect x={i * 5} y="0" width="3" height={14 - i * 1.5} />
                  <rect x={i * 5} y={16 - i * 1.5} width="3" height={5 + i * 1.5} />
                </g>
              ))}
            </svg>
            帐户无效
            <Resize>
              <svg width="15" height="15" viewBox="0 0 15 15">
                <path d="M1 15L15 1M6 15l9-9M11 15l4-4" stroke="#9a9a9a" strokeWidth="1.5" />
              </svg>
            </Resize>
          </StatusCell>
        </StatusBar>
      </Window>
    </Desktop>
  );
}

export default App;
